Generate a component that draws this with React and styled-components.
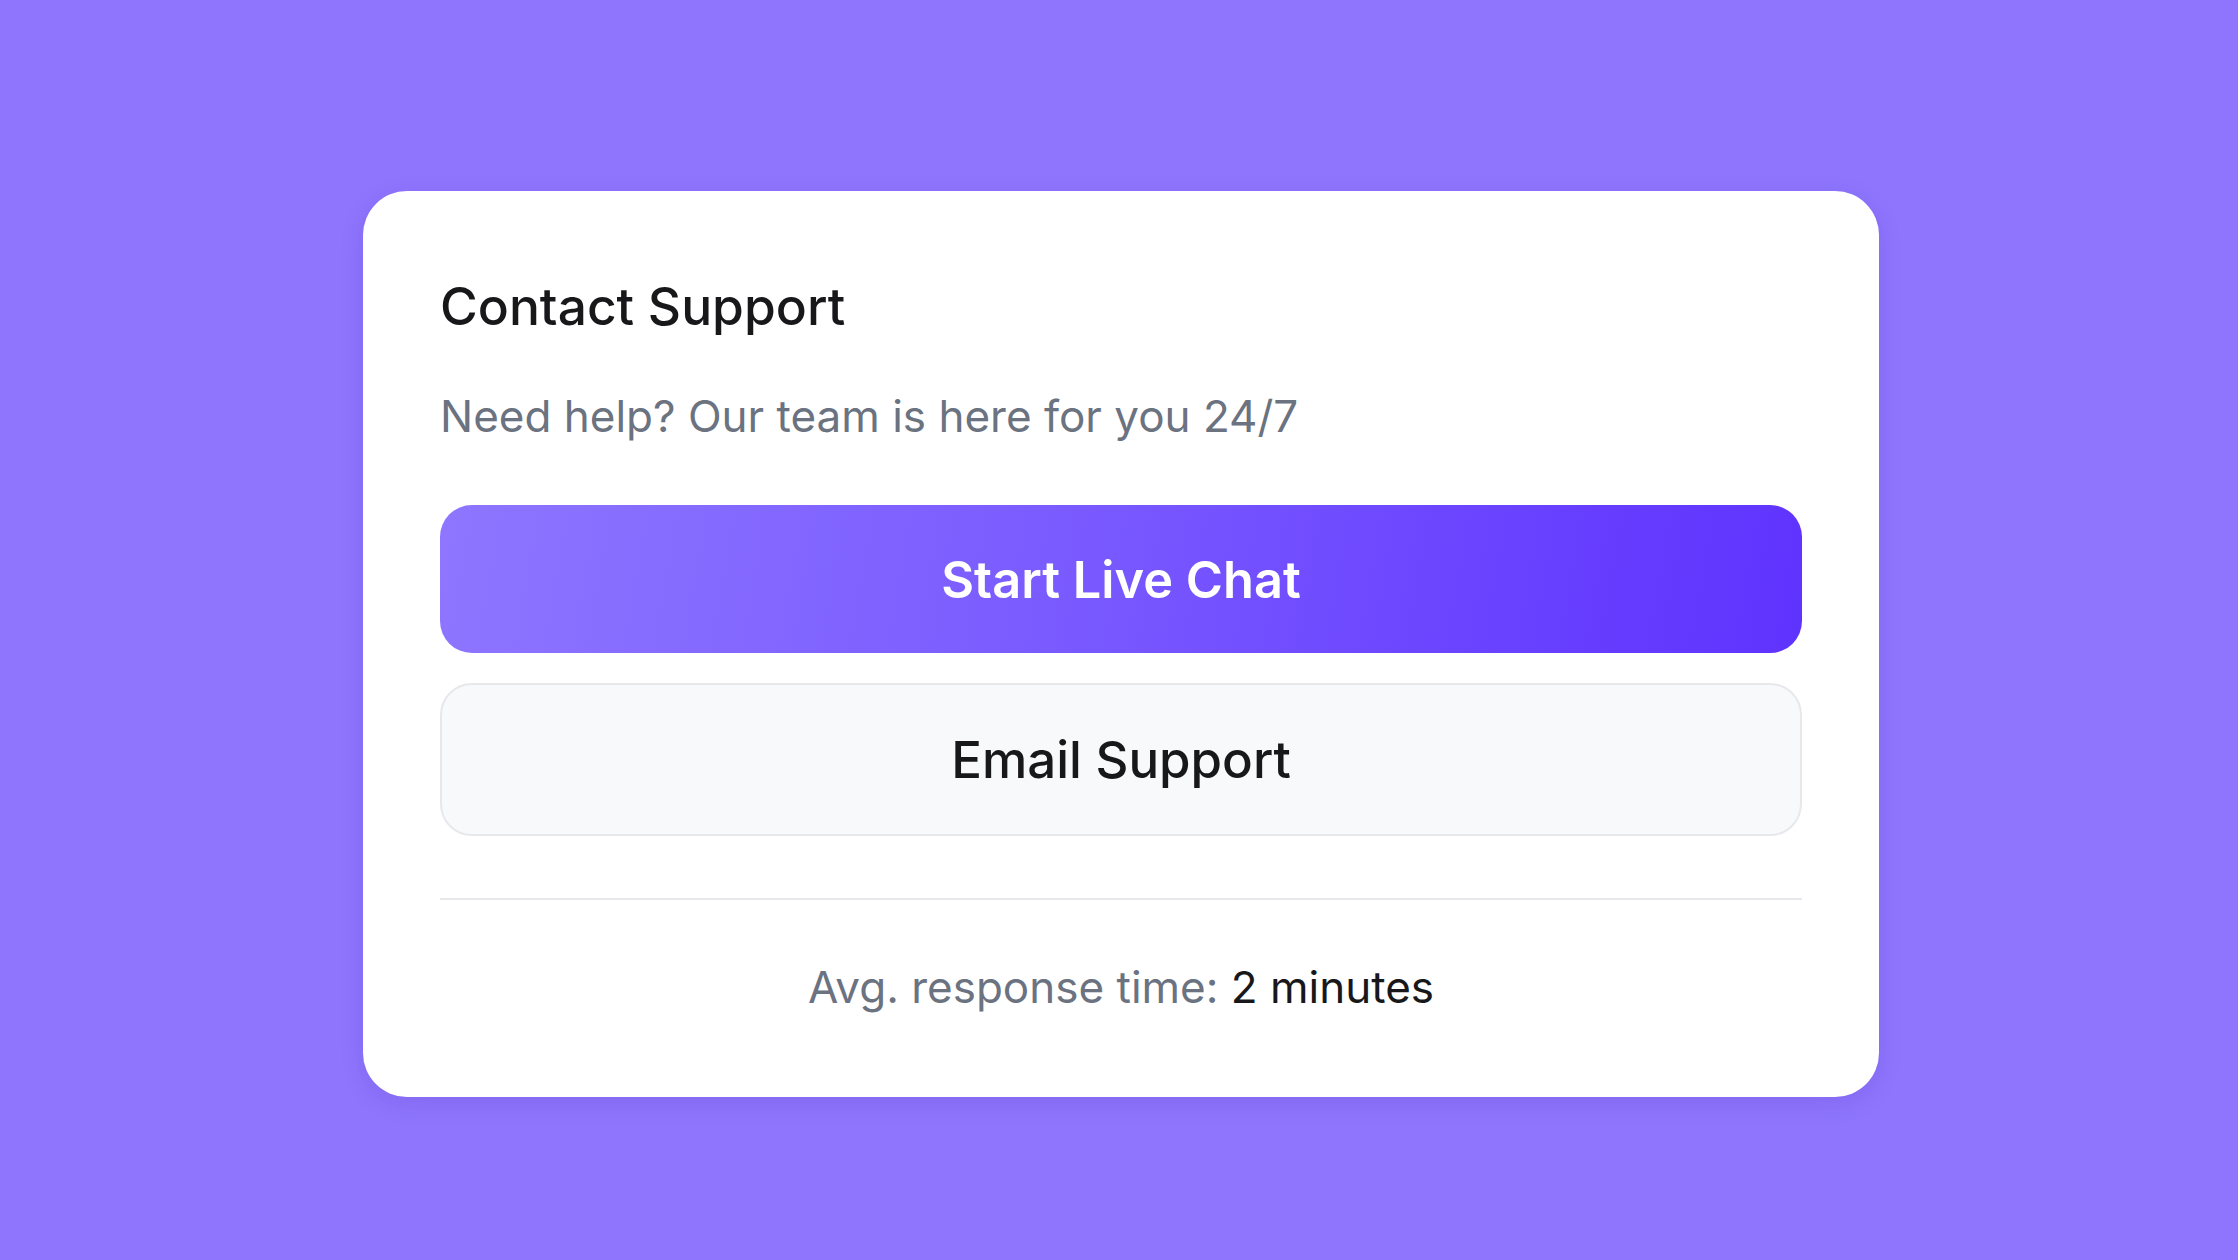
import React from "react";
import styled, { createGlobalStyle } from "styled-components";

const GlobalStyle = createGlobalStyle`
  html, body {
    margin: 0;
    padding: 0;
    background: #8f75fe;
  }
  body {
    font-family: Inter, "Noto Sans", "Liberation Sans", sans-serif;
    -webkit-font-smoothing: antialiased;
  }
  * { box-sizing: border-box; }
`;

const Page = styled.main`
  min-height: 1260px;
  width: 100%;
  display: flex;
  justify-content: center;
  align-items: flex-start;
  padding-top: 191px;
  padding-left: 4px;
  background: #8f75fe;
`;

const Card = styled.section`
  width: 1516px;
  background: #ffffff;
  border-radius: 44px;
  padding: 84px 77px 80px 77px;
  display: flex;
  flex-direction: column;
  box-shadow: 0 6px 24px rgba(40, 20, 120, 0.12);
`;

const Title = styled.h2`
  margin: 0;
  font-size: 51.5px;
  line-height: 62px;
  font-weight: 500;
  color: #18181b;
  letter-spacing: 0;
`;

const Subtitle = styled.p`
  margin: 49px 0 0;
  font-size: 44px;
  line-height: 60px;
  font-weight: 400;
  color: #6b7280;
`;

const Actions = styled.div`
  margin-top: 59px;
  display: flex;
  flex-direction: column;
  gap: 30px;
`;

const Button = styled.button`
  width: 100%;
  height: ${(p) => (p.$variant === "primary" ? "148px" : "153px")};
  border-radius: 32px;
  font-family: inherit;
  font-size: ${(p) => (p.$variant === "primary" ? "50.5px" : "51px")};
  font-weight: ${(p) => (p.$variant === "primary" ? 600 : 500)};
  cursor: pointer;
  display: flex;
  align-items: center;
  justify-content: center;
  color: ${(p) => (p.$variant === "primary" ? "#ffffff" : "#18181b")};
  background: ${(p) =>
    p.$variant === "primary"
      ? "linear-gradient(100deg, #8e76ff 0%, #7a5bff 45%, #6840ff 80%, #5f33fe 100%)"
      : "#f8f9fb"};
  border: ${(p) => (p.$variant === "primary" ? "none" : "2px solid #e6e8ec")};
`;

const Divider = styled.hr`
  margin: 62px 0 0;
  border: none;
  height: 2px;
  background: #e7e8ec;
`;

const Footer = styled.p`
  margin: 58px 0 0;
  text-align: center;
  font-size: 44px;
  line-height: 59px;
  color: #6b7280;
`;

const Strong = styled.span`
  color: #18181b;
`;

export default function App() {
  return (
    <>
      <GlobalStyle />
      <Page>
        <Card>
          <Title>Contact Support</Title>
          <Subtitle>Need help? Our team is here for you 24/7</Subtitle>
          <Actions>
            <Button $variant="primary">Start Live Chat</Button>
            <Button $variant="secondary">Email Support</Button>
          </Actions>
          <Divider />
          <Footer>
            Avg. response time: <Strong>2 minutes</Strong>
          </Footer>
        </Card>
      </Page>
    </>
  );
}
